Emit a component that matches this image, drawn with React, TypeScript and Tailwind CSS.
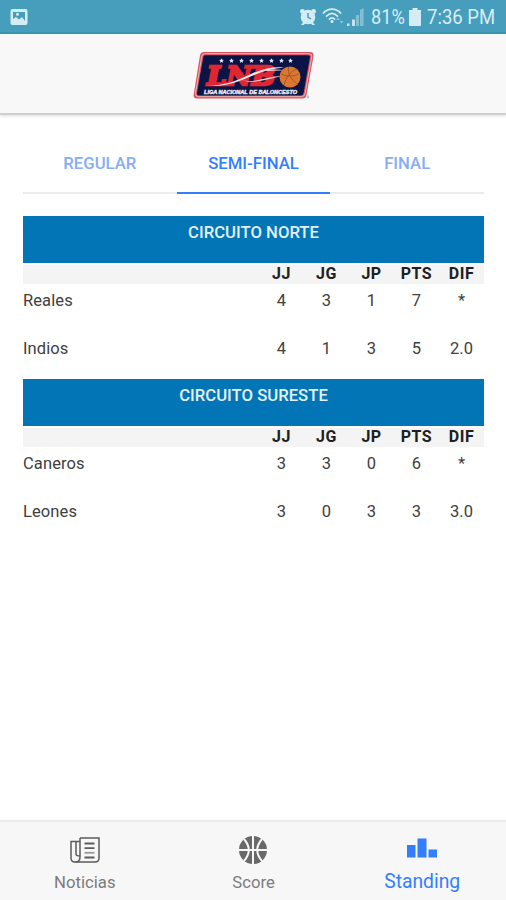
import React, { useState } from "react";

interface Team {
  name: string;
  stats: string[];
}

interface Circuit {
  title: string;
  teams: Team[];
}

const tabs = ["REGULAR", "SEMI-FINAL", "FINAL"];
const columns = ["JJ", "JG", "JP", "PTS", "DIF"];

const circuits: Circuit[] = [
  {
    title: "CIRCUITO NORTE",
    teams: [
      { name: "Reales", stats: ["4", "3", "1", "7", "*"] },
      { name: "Indios", stats: ["4", "1", "3", "5", "2.0"] },
    ],
  },
  {
    title: "CIRCUITO SURESTE",
    teams: [
      { name: "Caneros", stats: ["3", "3", "0", "6", "*"] },
      { name: "Leones", stats: ["3", "0", "3", "3", "3.0"] },
    ],
  },
];

function StatusBar() {
  return (
    <div className="flex h-[34px] shrink-0 items-center border-b-2 border-[#3797b5] bg-[#479ebc] pl-[10px] pr-[9px] text-[#d9edf4]">
      <svg width="18" height="18" viewBox="0 0 18 18" className="mt-px">
        <rect x="0.5" y="1" width="17" height="16" rx="2" fill="#d4edf4" />
        <path d="M3 4h12v9l-3-4-3 2.5L6 9l-3 2z" fill="#479ebc" />
        <circle cx="7.5" cy="6.3" r="1.5" fill="#d4edf4" />
      </svg>
      <div className="ml-auto flex items-center">
        <svg width="18" height="18" viewBox="0 0 18 18" fill="#d4edf4" className="mt-[2px]">
          <circle cx="9" cy="9" r="7.3" />
          <circle cx="3.4" cy="3.4" r="2.4" />
          <circle cx="14.6" cy="3.4" r="2.4" />
          <path d="M2 17l3-4 2 2-2.5 2zM16 17l-3-4-2 2 2.5 2z" />
          <path d="M9 5v4.3l3 1.6" fill="none" stroke="#479ebc" strokeWidth="1.5" />
        </svg>
        <svg width="22" height="17" viewBox="0 0 22 17" fill="none" stroke="#d4edf4" strokeWidth="1.8" className="ml-[5px]">
          <path d="M1 5.5C6-.3 14-.3 19 5.5M4 8.7c4-4.4 8-4.4 12 0M7 11.6c2-2.2 4-2.2 6 0" />
          <circle cx="10" cy="13.6" r="1.5" fill="#d4edf4" stroke="none" />
          <path d="M14 12l2-2.5 2 2.5zM17.5 13l2 2.5 2-2.5z" fill="#8cc4d8" stroke="none" />
        </svg>
        <svg width="19" height="18" viewBox="0 0 19 18" className="ml-[2px] mt-[2px]">
          <path d="M1 15.5h2.5V18H1zM6 11.5h3V18H6z" fill="#c4e3ed" />
          <path d="M10 7h3v11h-3zM14 2l3.5-2v18H14z" fill="#83bfd3" />
        </svg>
        <span className="ml-[6px] mt-[2px] w-[36px] text-[20px] leading-none">
          <span className="inline-block origin-left scale-x-[0.91]">81%</span>
        </span>
        <svg width="12" height="18" viewBox="0 0 12 18" fill="#d4edf4" className="ml-[2px] mt-[2px]">
          <path d="M3.5 0h5v2H12v2H0V2h3.5z" />
          <rect y="4" width="12" height="14" rx="1" />
        </svg>
        <span className="ml-[6px] mt-[2px] w-[70px] whitespace-nowrap text-[20px] leading-none">
          <span className="inline-block origin-left scale-x-[0.925]">7:36 PM</span>
        </span>
      </div>
    </div>
  );
}

function Logo() {
  return (
    <svg width="124" height="52" viewBox="0 0 124 52">
      <path d="M12 3h106q4 0 3.5 4l-7 39q-.7 3.5-4 3.5H5q-4 0-3.3-4L8 6.5Q8.600 3 12 3z" fill="#d65560" />
      <path d="M12.5 4.700h104.500q3.200 0 2.700 3l-6.500 36.500q-.6 3.500-3.500 3.500H6.500q-3.500 0-3-3.300L9.700 7.500q.5-2.800 2.800-2.800z" fill="none" stroke="#edb5bb" strokeWidth="1" />
      <path d="M13 6.200h103q2.300 0 1.900 2.300l-6.200 35q-.5 2.900-3 2.900H7q-2.500 0-2-2.700L11.200 8.400q.4-2.200 1.800-2.200z" fill="#0c1446" />
      {[29.5, 39.5, 49.5, 59.5, 69.5, 79.5, 89.5, 98.5].map((x) => (
        <path key={x} transform={`translate(${x} 11.5)`} d="M0-2.300l.7 1.500 1.700.2-1.200 1.100.3 1.700L0 1.400l-1.500.8.3-1.700-1.200-1.100 1.700-.2z" fill="#e5e7f0" />
      ))}
      <text x="15" y="36" textLength="68" lengthAdjust="spacingAndGlyphs" fontFamily="DejaVu Serif, serif" fontWeight="700" fontStyle="italic" fontSize="25.5" fill="#e02630" stroke="#e02630" strokeWidth="2.4">
        LNB
      </text>
      {/* ball trail */}
      <path d="M14 37c20 0 34-7 45-12 13-6 24-7.500 33-6.500-11 1-21 3.500-31 8-14 6-27 11.500-47 10.500z" fill="#f8e9ec" />
      <path d="M49 31c13 4 25-4 42-4-14 2-28 9-42 4zM69 22c9-1.500 16-2 24-.5-9 0-16 .6-24 .5z" fill="#f2cdd3" />
      <circle cx="98" cy="28" r="10.5" fill="#d97832" />
      <path d="M88.5 24.500c7 4 14 3 19 0M92 36c2-8 6-13 13-16M96.500 18c-1 7 3 13 9 17" fill="none" stroke="#9a4c20" strokeWidth=".8" />
      <text x="12" y="44.5" textLength="93" lengthAdjust="spacingAndGlyphs" fontFamily="Liberation Sans, sans-serif" fontWeight="700" fontStyle="italic" fontSize="5" fill="#e9ebf3" stroke="#e9ebf3" strokeWidth=".4">
        LIGA NACIONAL DE BALONCESTO
      </text>
      <circle cx="116" cy="48" r="1" fill="none" stroke="#8f9fc0" strokeWidth=".7" />
    </svg>
  );
}

function StandingsTable({ title, teams }: Circuit) {
  return (
    <section className="h-[163px] text-[16.5px] leading-[20px] tracking-[0.1px]">
      <h2 className="h-[47px] bg-[#0175b5] pt-[7px] text-center text-[16.7px] font-medium tracking-normal text-[#e4f1fa]">{title}</h2>
      <div className="mt-[2px] grid h-[19px] grid-cols-[1fr_repeat(5,45px)] bg-[#f4f4f4] text-center text-[16px] font-bold leading-[17px] tracking-[0.5px] text-[#202020]">
        <span />
        {columns.map((column) => (
          <span key={column}>{column}</span>
        ))}
      </div>
      {teams.map((team) => (
        <div key={team.name} className="grid h-[48px] grid-cols-[1fr_repeat(5,45px)] pt-[7px] text-center text-[#404040]">
          <span className="text-left">{team.name}</span>
          {team.stats.map((stat, i) => (
            <span key={columns[i]}>{stat}</span>
          ))}
        </div>
      ))}
    </section>
  );
}

function NewsIcon() {
  return (
    <svg width="30" height="26" viewBox="0 0 30 26" fill="none" stroke="#5c5c5c" strokeWidth="1.5">
      <path d="M10 1h19v20q0 4-4 4H5q-4 0-4-4V4.5h9" />
      <path d="M10 1v19q0 5-4.500 5M6 4.500V17q0 2 4 2" />
      <path d="M14.5 6.500h10M14.500 11.200h10M14.500 20.500h10" strokeWidth="1.8" />
      <path d="M14.5 15.800h10" stroke="#999" strokeWidth="1.8" />
    </svg>
  );
}

function BallIcon() {
  return (
    <svg width="28" height="28" viewBox="0 0 28 28">
      <circle cx="14" cy="14" r="14" fill="#696969" />
      <path d="M14 0v28M0 14h28M5 3q9.500 11 0 22M23 3q-9.500 11 0 22" fill="none" stroke="#f7f7f7" strokeWidth="2" />
    </svg>
  );
}

function ChartIcon() {
  return (
    <svg width="30" height="20" viewBox="0 0 30 20" fill="#327eff">
      <path d="M0 7h8.500v12.500H0zM10.500.5h9v19h-9zM21.500 11.500H30v8h-8.500z" />
    </svg>
  );
}

export default function App() {
  const [activeTab, setActiveTab] = useState("SEMI-FINAL");

  return (
    <div className="flex h-[900px] w-[506px] flex-col overflow-hidden bg-white font-['Roboto',sans-serif]">
      <StatusBar />

      <header className="flex h-[81px] shrink-0 justify-center border-b-2 border-[#d0d0d0] bg-[#f8f8f8] pl-[2px] pt-[15px] shadow-[0_1px_3px_rgba(0,0,0,0.14)]">
        <Logo />
      </header>

      <main className="flex-1 pl-[23px] pr-[22px] pt-[17px]">
        <nav className="grid h-[62px] grid-cols-3">
          {tabs.map((tab) => (
            <button
              key={tab}
              onClick={() => setActiveTab(tab)}
              className={`border-b-2 pt-[4px] text-[16.7px] font-medium leading-none ${
                activeTab === tab ? "border-[#327eff] text-[#327eff]" : "border-[#ececec] text-[#86adf8]"
              }`}
            >
              {tab}
            </button>
          ))}
        </nav>

        <div className="mt-[22px]">
          {circuits.map((circuit) => (
            <StandingsTable key={circuit.title} {...circuit} />
          ))}
        </div>
      </main>

      <footer className="grid h-[80px] shrink-0 grid-cols-3 border-t-2 border-[#ececec] bg-[#f7f7f7] text-[#7c7c7c]">
        <button className="flex flex-col items-center pl-px pt-[15px]">
          <NewsIcon />
          <span className="mt-[10px] text-[16.7px] leading-[20px]">Noticias</span>
        </button>
        <button className="flex flex-col items-center pl-px pt-[14px]">
          <BallIcon />
          <span className="mt-[9px] text-[16.7px] leading-[20px]">Score</span>
        </button>
        <button className="flex flex-col items-center pl-px pt-[16px] text-[#327eff]">
          <ChartIcon />
          <span className="mt-[13px] text-[19.3px] leading-[22px]">Standing</span>
        </button>
      </footer>
    </div>
  );
}
